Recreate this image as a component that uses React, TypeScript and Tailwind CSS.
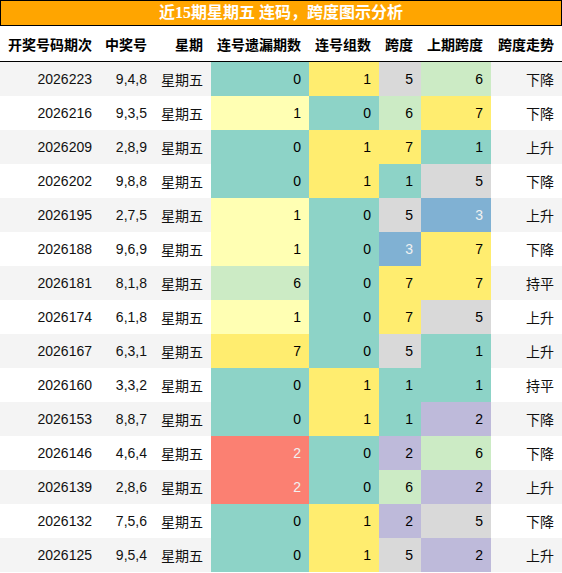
import React from 'react';

type Row = {
  issue: string;
  nums: string;
  miss: number;
  groups: number;
  span: number;
  prevSpan: number;
  trend: string;
};

const rows: Row[] = [
  { issue: '2026223', nums: '9,4,8', miss: 0, groups: 1, span: 5, prevSpan: 6, trend: '下降' },
  { issue: '2026216', nums: '9,3,5', miss: 1, groups: 0, span: 6, prevSpan: 7, trend: '下降' },
  { issue: '2026209', nums: '2,8,9', miss: 0, groups: 1, span: 7, prevSpan: 1, trend: '上升' },
  { issue: '2026202', nums: '9,8,8', miss: 0, groups: 1, span: 1, prevSpan: 5, trend: '下降' },
  { issue: '2026195', nums: '2,7,5', miss: 1, groups: 0, span: 5, prevSpan: 3, trend: '上升' },
  { issue: '2026188', nums: '9,6,9', miss: 1, groups: 0, span: 3, prevSpan: 7, trend: '下降' },
  { issue: '2026181', nums: '8,1,8', miss: 6, groups: 0, span: 7, prevSpan: 7, trend: '持平' },
  { issue: '2026174', nums: '6,1,8', miss: 1, groups: 0, span: 7, prevSpan: 5, trend: '上升' },
  { issue: '2026167', nums: '6,3,1', miss: 7, groups: 0, span: 5, prevSpan: 1, trend: '上升' },
  { issue: '2026160', nums: '3,3,2', miss: 0, groups: 1, span: 1, prevSpan: 1, trend: '持平' },
  { issue: '2026153', nums: '8,8,7', miss: 0, groups: 1, span: 1, prevSpan: 2, trend: '下降' },
  { issue: '2026146', nums: '4,6,4', miss: 2, groups: 0, span: 2, prevSpan: 6, trend: '下降' },
  { issue: '2026139', nums: '2,8,6', miss: 2, groups: 0, span: 6, prevSpan: 2, trend: '上升' },
  { issue: '2026132', nums: '7,5,6', miss: 0, groups: 1, span: 2, prevSpan: 5, trend: '下降' },
  { issue: '2026125', nums: '9,5,4', miss: 0, groups: 1, span: 5, prevSpan: 2, trend: '上升' },
];

// cell colours per value (Set3-ish palette)
const missColor: Record<number, string> = {
  0: 'bg-[#8dd3c7] text-black',
  1: 'bg-[#ffffb3] text-black',
  2: 'bg-[#fb8072] text-[#f1f1f1]',
  6: 'bg-[#ccebc5] text-black',
  7: 'bg-[#ffed6f] text-black',
};

const groupColor: Record<number, string> = {
  0: 'bg-[#8dd3c7] text-black',
  1: 'bg-[#ffed6f] text-black',
};

const spanColor: Record<number, string> = {
  1: 'bg-[#8dd3c7] text-black',
  2: 'bg-[#bebada] text-black',
  3: 'bg-[#80b1d3] text-[#f1f1f1]',
  5: 'bg-[#d9d9d9] text-black',
  6: 'bg-[#ccebc5] text-black',
  7: 'bg-[#ffed6f] text-black',
};

const cols = 'grid grid-cols-[100px_55px_56px_98px_70px_42px_70px_71px]';
const headers = ['开奖号码期次', '中奖号', '星期', '连号遗漏期数', '连号组数', '跨度', '上期跨度', '跨度走势'];

export default function App() {
  return (
    <div
      className="w-[562px] bg-white text-[14px] text-[#111]"
      style={{ fontFamily: '"Liberation Sans", "Noto Sans CJK SC", sans-serif' }}
    >
      <div
        className="h-[26px] border border-black bg-[#ffa500] flex items-center justify-center text-white font-bold text-[16px]"
        style={{ fontFamily: '"Liberation Serif", "Noto Sans CJK SC", serif' }}
      >
        近15期星期五 连码，跨度图示分析
      </div>

      <div className={`${cols} h-[36px] border-b border-black font-bold text-black`}>
        {headers.map((h) => (
          <div key={h} className="flex items-center justify-end pr-2 pt-[3px]">
            {h}
          </div>
        ))}
      </div>

      {rows.map((r, i) => (
        <div key={r.issue} className={`${cols} h-[34px] ${i % 2 === 0 ? 'bg-[#f4f4f4]' : 'bg-white'}`}>
          <div className="flex items-center justify-end pr-2">{r.issue}</div>
          <div className="flex items-center justify-end pr-2">{r.nums}</div>
          <div className="flex items-center justify-end pr-2 pt-[2px]">星期五</div>
          <div className={`flex items-center justify-end pr-2 ${missColor[r.miss]}`}>{r.miss}</div>
          <div className={`flex items-center justify-end pr-2 ${groupColor[r.groups]}`}>{r.groups}</div>
          <div className={`flex items-center justify-end pr-2 ${spanColor[r.span]}`}>{r.span}</div>
          <div className={`flex items-center justify-end pr-2 ${spanColor[r.prevSpan]}`}>{r.prevSpan}</div>
          <div className="flex items-center justify-end pr-2 pt-[2px]">{r.trend}</div>
        </div>
      ))}
    </div>
  );
}
